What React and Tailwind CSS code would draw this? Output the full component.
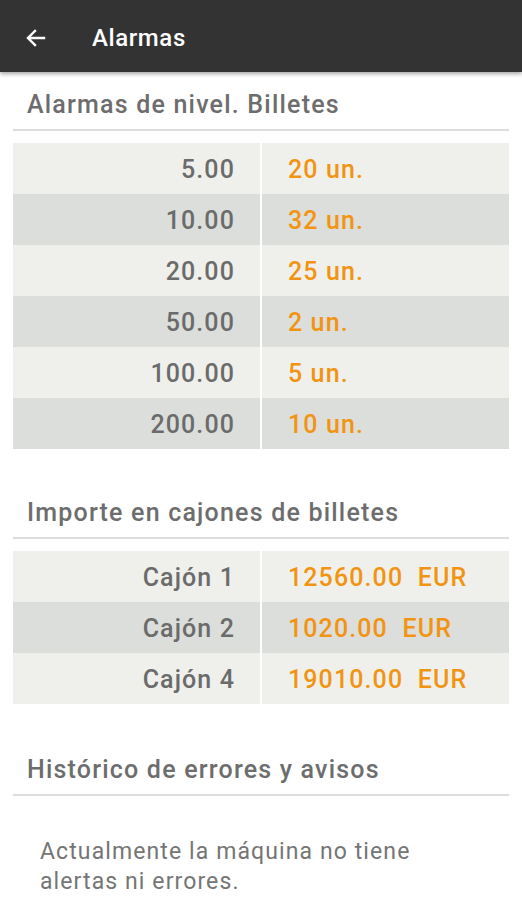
import React from "react";

const billetes = [
  ["5.00", "20 un."],
  ["10.00", "32 un."],
  ["20.00", "25 un."],
  ["50.00", "2 un."],
  ["100.00", "5 un."],
  ["200.00", "10 un."],
];

const cajones = [
  ["Cajón 1", "12560.00  EUR"],
  ["Cajón 2", "1020.00  EUR"],
  ["Cajón 4", "19010.00  EUR"],
];

function Heading({ children, top }) {
  return (
    <div className={`mx-[13px] border-b-2 border-[#dddddd] pl-[14px] pb-[8px] pt-[1px] ${top}`}>
      <div className="text-[25px] leading-[32px] font-medium tracking-[1.2px] text-[#6d6d6d]">{children}</div>
    </div>
  );
}

function Table({ rows }) {
  return (
    <div className="mx-[13px] mt-[12px] flex flex-col">
      {rows.map(([a, b], i) => (
        <div
          key={i}
          className={`flex h-[51px] items-center pt-[2px] ${i % 2 === 0 ? "bg-[#eff0ec]" : "bg-[#dcdedb]"}`}
        >
          <div className="w-[247px] pr-[25px] text-right text-[25px] font-medium tracking-[1.1px] text-[#6b6b6b]">{a}</div>
          <div className="-mt-[2px] h-[51px] w-[2px] bg-white" />
          <div className="flex-1 whitespace-pre pl-[26px] text-[25px] font-medium tracking-[1.1px] text-[#f29412]">{b}</div>
        </div>
      ))}
    </div>
  );
}

export default function App() {
  return (
    <div className="min-h-[900px] w-[522px] bg-white" style={{ fontFamily: "Roboto, 'Noto Sans', sans-serif" }}>
      <div className="relative z-10 flex h-[72px] items-center bg-[#333333] pt-[4px] shadow-[0_2px_4px_rgba(0,0,0,0.35)]">
        <svg className="ml-[24px]" width="24" height="24" viewBox="0 0 24 24" fill="none">
          <path d="M20 12H5M11 5l-7 7 7 7" stroke="white" strokeWidth="2.4" strokeLinecap="square" />
        </svg>
        <div className="ml-[44px] text-[24px] font-medium tracking-[0.6px] text-white">Alarmas</div>
      </div>
      <Heading top="mt-[16px]">Alarmas de nivel. Billetes</Heading>
      <Table rows={billetes} />
      <Heading top="mt-[47px]">Importe en cajones de billetes</Heading>
      <Table rows={cajones} />
      <Heading top="mt-[49px]">Histórico de errores y avisos</Heading>
      <div className="mt-[41px] pl-[40px] pr-[20px] text-[23px] leading-[30px] tracking-[1.1px] text-[#757575]">
        Actualmente la máquina no tiene
        <br />
        alertas ni errores.
      </div>
    </div>
  );
}
